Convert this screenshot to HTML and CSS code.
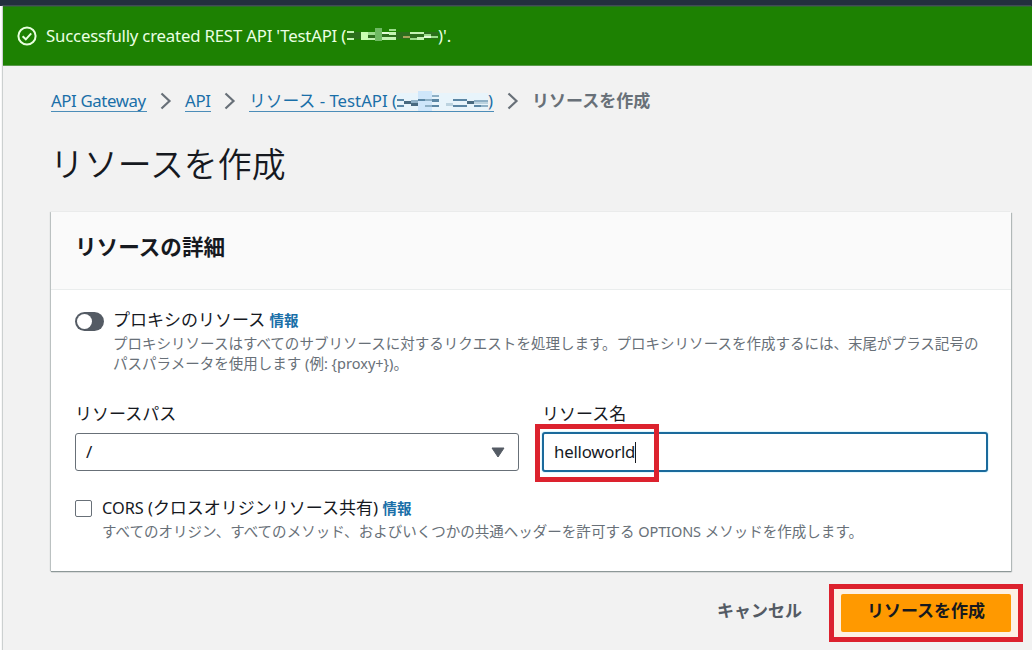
FILE: index.html
```
<!DOCTYPE html>
<html lang="ja">
    <head>
        <meta charset="utf-8">
        <title>リソースを作成</title>
        <link rel="stylesheet" href="styles.css">
    </head>
    <body>
        <div class="topbar"></div>
        <div class="page">
            <div class="flash">
                <svg class="flash-icon" width="20" height="20" viewBox="0 0 20 20" fill="none" stroke="#e9ffe0" stroke-width="2">
                    <circle cx="10" cy="10" r="8.6"/>
                    <path d="M5.6 10.2l3.2 3.1 5.4-6"/>
                </svg>
                <span class="flash-text">Successfully created REST API 'TestAPI (</span>
                <svg class="mosaic" width="91" height="16" viewBox="0 0 91 16" shape-rendering="crispEdges">
                    <path fill="#2c6f1c" d="M0 4h91v7H0z"/>
                    <path fill="#c4f3b4" d="M0 3h7v2H0zM0 10h7v2H0zM21 10h7v2h-7zM42 4h7v3h-7zM35 9h14v3H35zM63 4h14v2H63zM70 9h7v3h-7z"/>
                    <path fill="#c9ffb0" d="M14 4h7v8h-7z"/>
                    <path fill="#6fba63" d="M28 0h7v13h-7z"/>
                    <path fill="#9bdc8b" d="M42 1h7v2h-7zM21 4h7v3h-7zM77 6h7v3h-7zM84 8h7v2h-7zM63 10h7v2h-7z"/>
                    <path fill="#e3fbd8" d="M35 4h7v2h-7zM77 8h7v2h-7z"/>
                    <path fill="#a6a35a" d="M56 8h7v2h-7z"/>
                </svg>
                <span>)'.</span>
            </div>

            <div class="content">
                <nav class="breadcrumb">
                    <a class="crumb crumb-gateway" href="#">API Gateway</a>
                    <svg class="chevron" width="12" height="18" viewBox="0 0 12 18"><path d="M1.5 1.5L9.5 9l-8 7.5"/></svg>
                    <a class="crumb crumb-api" href="#">API</a>
                    <svg class="chevron" width="12" height="18" viewBox="0 0 12 18"><path d="M1.5 1.5L9.5 9l-8 7.5"/></svg>
                    <a class="crumb crumb-resource" href="#">リソース<span class="crumb-name"> - TestAPI (</span><svg class="mosaic" width="91" height="20" viewBox="0 0 91 20" shape-rendering="crispEdges">
                            <path fill="#e8f4fb" d="M0 2h91v17H0z"/>
                            <path fill="#cfe6fa" d="M21 0h14v20H21z"/>
                            <path fill="#5b86a4" d="M0 8h7v2H0zM0 14h7v2H0zM21 8h7v2h-7zM35 8h7v3h-7zM35 14h7v2h-7zM56 8h14v2H56zM56 14h14v2H56zM77 14h7v2h-7z"/>
                            <path fill="#48697f" d="M7 10h7v3H7zM14 12h7v3h-7zM70 10h7v3h-7z"/>
                            <path fill="#8fb0c6" d="M14 9h7v3h-7zM35 4h7v2h-7zM28 14h7v2h-7zM28 8h7v2h-7zM77 9h14v2H77zM84 14h7v2h-7z"/>
                            <path fill="#bcd3e0" d="M49 12h7v3h-7zM77 11h14v2H77z"/>
                        </svg>)</a>
                    <svg class="chevron" width="12" height="18" viewBox="0 0 12 18"><path d="M1.5 1.5L9.5 9l-8 7.5"/></svg>
                    <span class="crumb-current">リソースを作成</span>
                </nav>

                <h1>リソースを作成</h1>

                <form class="card">
                    <div class="card-header">
                        <h2>リソースの詳細</h2>
                    </div>
                    <div class="card-body">
                        <div class="option">
                            <span class="toggle"></span>
                            <div>
                                <div class="option-label">プロキシのリソース <a class="info" href="#">情報</a></div>
                                <p class="description">プロキシリソースはすべてのサブリソースに対するリクエストを処理します。プロキシリソースを作成するには、末尾がプラス記号の<br>パスパラメータを使用します (例: {proxy+})。</p>
                            </div>
                        </div>

                        <div class="fields">
                            <div class="field">
                                <div class="field-label">リソースパス</div>
                                <div class="select">
                                    <span>/</span>
                                    <svg width="14" height="11" viewBox="0 0 14 11"><path d="M1 1h12L7 10z" fill="#545b64" stroke="#545b64" stroke-linejoin="round"/></svg>
                                </div>
                            </div>
                            <div class="field">
                                <div class="field-label">リソース名</div>
                                <div class="input">
                                    <span class="input-value">helloworld</span><span class="caret"></span>
                                    <span class="highlight highlight-name"></span>
                                </div>
                            </div>
                        </div>

                        <div class="option option-cors">
                            <span class="checkbox"></span>
                            <div>
                                <div class="option-label"><span class="cors">CORS (</span>クロスオリジンリソース共有) <a class="info" href="#">情報</a></div>
                                <p class="description">すべてのオリジン、すべてのメソッド、およびいくつかの共通ヘッダーを許可する <span class="options">OPTIONS</span> メソッドを作成します。</p>
                            </div>
                        </div>
                    </div>
                </form>

                <div class="actions">
                    <span class="cancel">キャンセル</span>
                    <div class="submit">
                        リソースを作成
                        <span class="highlight highlight-submit"></span>
                    </div>
                </div>
            </div>
        </div>
    </body>
</html>
```
FILE: styles.css
```
* {
    box-sizing: border-box;
}
body {
    margin: 0;
    height: 650px;
    overflow: hidden;
    background-color: #fff;
    color: #16191f;
    font-family: "Noto Sans", "Noto Sans CJK JP", sans-serif;
    font-size: 17px;
    line-height: 24px;
    white-space: nowrap;
}
h1, h2, p {
    margin: 0;
}
a {
    color: #1a6fa8;
    text-decoration: none;
}
.topbar {
    height: 6px;
    background-color: #232f3e;
}
.page {
    margin-left: 3px;
    height: 644px;
    background-color: #f2f2f2;
    box-shadow: -1px 0 1px #ccd0d0;
}
.flash {
    display: flex;
    align-items: center;
    height: 60px;
    padding: 0 13px 1px 14px;
    background-color: #1d8102;
    border-top: 1px solid #2f6b2b;
    border-bottom: 1px solid #5a9a4c;
    color: #eaffe2;
    font-size: 16.8px;
}
.flash-icon {
    margin-right: 9px;
}
.flash-text {
    width: 301px;
    letter-spacing: -0.2px;
}
.mosaic {
    flex: none;
}
.content {
    padding: 23px 21px 0 48px;
}
.breadcrumb {
    display: flex;
    align-items: center;
    height: 24px;
}
.crumb {
    display: flex;
    align-items: center;
    height: 22px;
    border-bottom: 1px solid #4c8db8;
    font-size: 16.8px;
    white-space: pre;
}
.crumb-gateway {
    width: 96px;
    letter-spacing: -0.38px;
}
.crumb-api {
    width: 26px;
    letter-spacing: -0.3px;
}
.crumb-resource {
    width: 245px;
}
.chevron {
    margin: 0 13px;
    fill: none;
    stroke: #687078;
    stroke-width: 2.2;
}
.crumb-current {
    color: #687078;
    font-weight: 700;
}
h1 {
    margin-top: 30px;
    margin-left: -1px;
    height: 69px;
    font-size: 33.9px;
    font-weight: 350;
    line-height: 42px;
}
.card {
    height: 359px;
    background-color: #fff;
    box-shadow: 0 1px 1px #8d9898, 1px 1px 1px #b9bfbf, -1px 0 1px #c4c9c9;
}
.card-header {
    height: 78px;
    padding: 19px 24px;
    background-color: #fafafa;
    border-bottom: 1px solid #eaeded;
}
h2 {
    font-size: 21.6px;
    font-weight: 700;
    line-height: 32px;
}
.card-body {
    padding: 18px 23px 0 24px;
}
.option {
    display: flex;
}
.option-label {
    height: 25px;
}
.info {
    font-size: 14.5px;
    font-weight: 700;
}
.description {
    color: #687078;
    font-size: 14.52px;
    line-height: 20px;
}
.toggle {
    width: 29px;
    height: 19px;
    margin: 4px 9px 0 0;
    padding: 2px;
    border-radius: 10px;
    background-color: #545b64;
}
.toggle::before {
    content: "";
    display: block;
    width: 15px;
    height: 15px;
    border-radius: 50%;
    background-color: #fff;
}
.fields {
    display: grid;
    grid-template-columns: 444px 446px;
    gap: 23px;
    margin-top: 29px;
}
.field-label {
    height: 31px;
}
.select, .input {
    display: flex;
    align-items: center;
    height: 38px;
    padding: 0 13px 0 10px;
    border: 1px solid #687078;
    border-radius: 3px;
    background-color: #fff;
}
.select {
    justify-content: space-between;
}
.input {
    position: relative;
    height: 40px;
    margin-top: -1px;
    border: 2px solid #1b6a9c;
    box-shadow: 0 0 0 1px #e2f8ff;
    font-size: 16.8px;
}
.input-value {
    letter-spacing: -0.2px;
}
.caret {
    width: 1px;
    height: 21px;
    background-color: #16191f;
}
.highlight {
    position: absolute;
    border: 5px solid #dc222e;
}
.highlight-name {
    left: -9px;
    top: -10px;
    width: 124px;
    height: 58px;
}
.option-cors {
    margin-top: 24px;
}
.checkbox {
    width: 17px;
    height: 17px;
    margin: 4px 10px 0 0;
    border: 1px solid #687078;
    border-radius: 2px;
}
.cors {
    font-size: 16.3px;
}
.options {
    letter-spacing: -0.1px;
}
.actions {
    display: flex;
    justify-content: flex-end;
    align-items: center;
    margin-top: 23px;
    font-weight: 700;
}
.cancel {
    margin: 0 39px 4px 0;
    color: #545b64;
}
.submit {
    position: relative;
    width: 170px;
    height: 38px;
    border-radius: 2px;
    background-color: #ff9900;
    line-height: 34px;
    text-align: center;
    box-shadow: 0 0 0 7px #fdf1e4;
}
.highlight-submit {
    left: -12px;
    top: -10px;
    width: 194px;
    height: 58px;
}
```
